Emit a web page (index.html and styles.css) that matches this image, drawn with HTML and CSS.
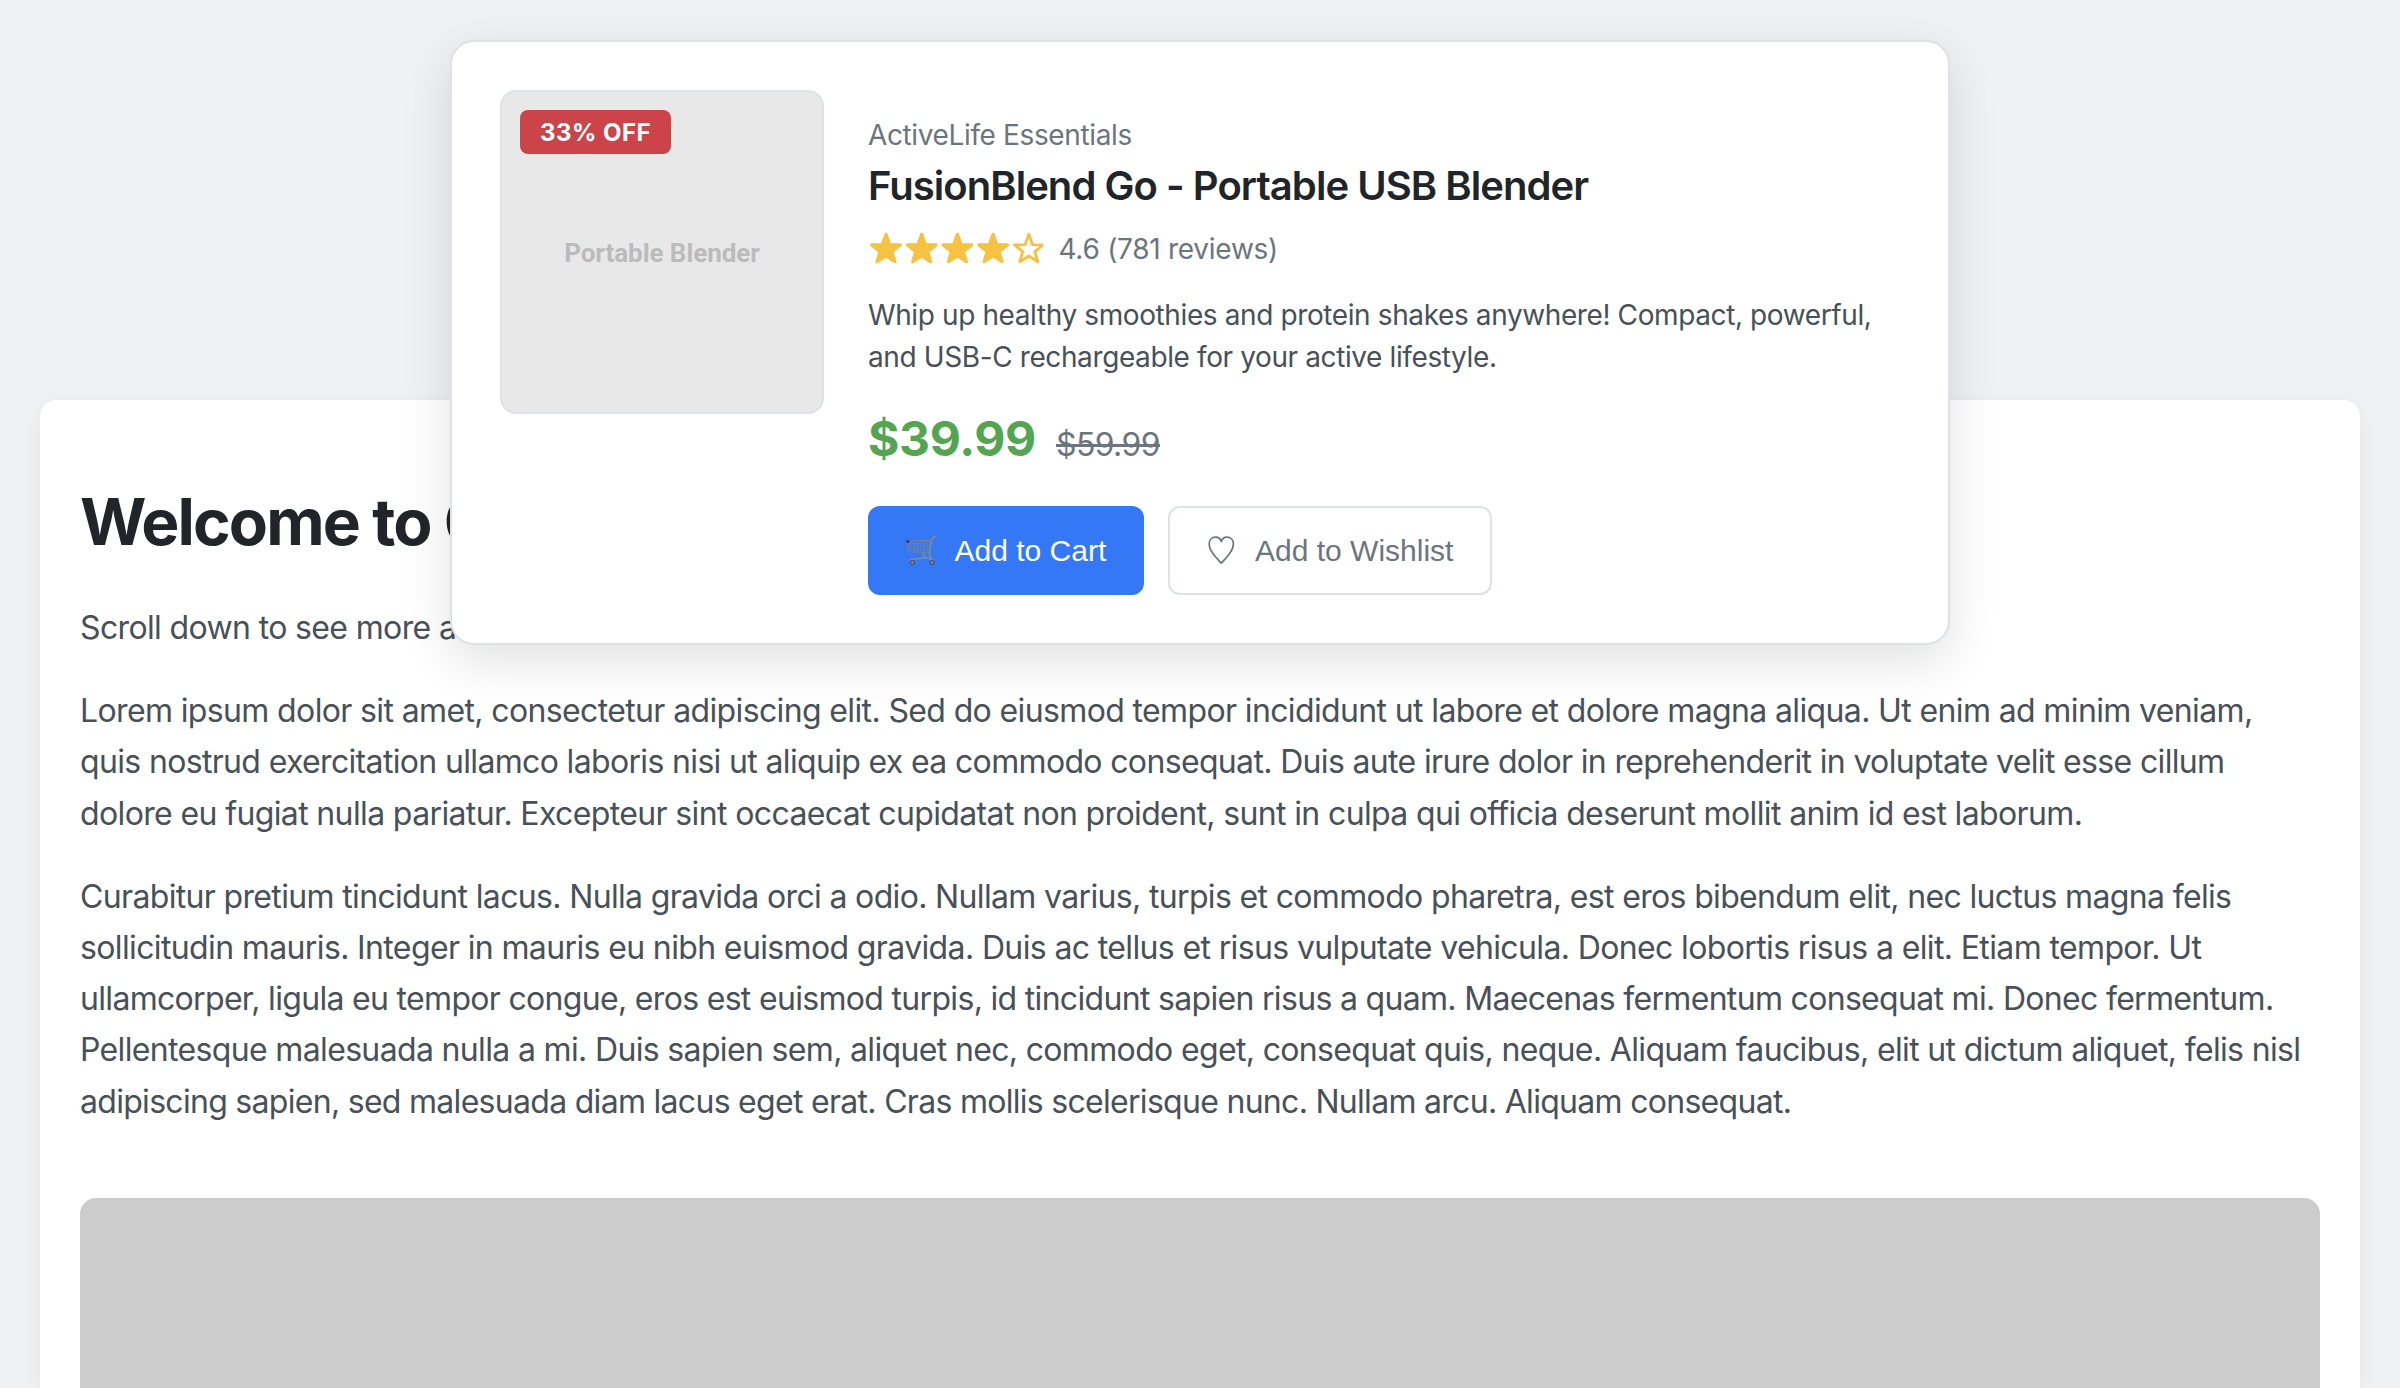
FILE: index.html
```html
<!DOCTYPE html>
<html lang="en">
<head>
<meta charset="utf-8">
<title>FusionBlend Go - Portable USB Blender</title>
<link rel="stylesheet" href="styles.css">
</head>
<body>
<main class="page">
  <h1 class="page-title">Welcome to Our</h1>
  <p class="intro">Scroll down to see more and</p>
  <p>
    <span class="line t1">Lorem ipsum dolor sit amet, consectetur adipiscing elit. Sed do eiusmod tempor incididunt ut labore et dolore magna aliqua. Ut enim ad minim veniam,</span>
    <span class="line t2">quis nostrud exercitation ullamco laboris nisi ut aliquip ex ea commodo consequat. Duis aute irure dolor in reprehenderit in voluptate velit esse cillum</span>
    <span class="line t1">dolore eu fugiat nulla pariatur. Excepteur sint occaecat cupidatat non proident, sunt in culpa qui officia deserunt mollit anim id est laborum.</span>
  </p>
  <p>
    <span class="line t2">Curabitur pretium tincidunt lacus. Nulla gravida orci a odio. Nullam varius, turpis et commodo pharetra, est eros bibendum elit, nec luctus magna felis</span>
    <span class="line t1">sollicitudin mauris. Integer in mauris eu nibh euismod gravida. Duis ac tellus et risus vulputate vehicula. Donec lobortis risus a elit. Etiam tempor. Ut</span>
    <span class="line t3">ullamcorper, ligula eu tempor congue, eros est euismod turpis, id tincidunt sapien risus a quam. Maecenas fermentum consequat mi. Donec fermentum.</span>
    <span class="line t2">Pellentesque malesuada nulla a mi. Duis sapien sem, aliquet nec, commodo eget, consequat quis, neque. Aliquam faucibus, elit ut dictum aliquet, felis nisl</span>
    <span class="line t4">adipiscing sapien, sed malesuada diam lacus eget erat. Cras mollis scelerisque nunc. Nullam arcu. Aliquam consequat.</span>
  </p>
  <div class="banner"></div>
</main>
<article class="card">
  <div class="photo"><span class="badge">33% OFF</span><span class="photo-label">Portable Blender</span></div>
  <div class="details">
    <div class="brand">ActiveLife Essentials</div>
    <h2 class="name">FusionBlend Go - Portable USB Blender</h2>
    <div class="rating">
      <svg class="stars" viewBox="0 0 175 33" width="175" height="33">
        <defs><path id="star" d="M18 2.3 L21.7 12.6 L32.3 12.9 L24 19.6 L27 29.7 L18 24 L9 29.7 L12 19.6 L3.7 12.9 L14.3 12.6 Z"/></defs>
        <g fill="#f5c242" stroke="#f5c242" stroke-width="3.2" stroke-linejoin="round">
          <use href="#star"/><use href="#star" x="35.7"/><use href="#star" x="71.4"/><use href="#star" x="107.1"/>
          <use href="#star" x="142.8" fill="#fff" stroke-width="2.9"/>
        </g>
      </svg>
      <span>4.6 (781 reviews)</span>
    </div>
    <div class="desc"><span class="line">Whip up healthy smoothies and protein shakes anywhere! Compact, powerful,</span><span class="line">and USB-C rechargeable for your active lifestyle.</span></div>
    <div class="prices"><span class="price">$39.99</span><s class="old">$59.99</s></div>
    <div class="actions">
      <button class="btn primary">
        <svg width="32.5" height="32" viewBox="0 0 32.5 32" fill="none" stroke="#78808f" stroke-width="1.1">
          <path d="M.8 6.3 25.6 5.2 23.4 18 1.9 16.5Z"/>
          <path stroke-width=".7" d="M1 8.7 25 8M1.3 11.2 24.5 11M1.6 13.8 24 14.5M4.5 6.2 5 16.5M8 6 8.3 16.8M11.5 5.8V17M15 5.6V17.2M18.6 5.5 18.2 17.5M22 5.4 21 17.8"/>
          <path stroke="#858b98" stroke-width="1.5" d="M29.8 1.2 27.3 2.6 25.6 5.2 23.3 18.2 25.8 25M16.7 17.8 19.8 22.8M3.6 25.2 8 24 22.5 22.5 26 26"/>
          <path stroke="none" fill="#273a62" d="M.2 5.3h3.1v2.5H.2z"/>
          <g fill="#a0a0a4" stroke="#4d5366" stroke-width="1.5"><circle cx="6.3" cy="27.6" r="1.9"/><circle cx="26.2" cy="27.6" r="1.9"/></g>
        </svg>
        <span>Add to Cart</span>
      </button>
      <button class="btn wish">
        <svg width="33" height="32" viewBox="0 0 33 32" fill="none" stroke="#6c757d" stroke-width="1.7" stroke-linejoin="round">
          <path d="M15.3 6.6C14.3 3.6 12.3 2.2 9.7 2.2 5.8 2.2 3.2 5 3.2 9 3.2 15.6 9.6 22 15.3 28.2 21 22 27.4 15.6 27.4 9 27.4 5 24.8 2.2 20.9 2.2 18.3 2.2 16.3 3.6 15.3 6.6Z"/>
        </svg>
        <span>Add to Wishlist</span>
      </button>
    </div>
  </div>
</article>
</body>
</html>
```
FILE: styles.css
```css
* { box-sizing: border-box; }
html, body { margin: 0; height: 1388px; overflow: hidden; }
body { padding: 400px 40px 0; background: #f0f1f5; font-family: Inter, sans-serif; color: #495057; }

.page { height: 988px; padding: 84.1px 40px 0; overflow: hidden; background: #fff; border-radius: 16px 16px 0 0; box-shadow: 0 4px 20px rgba(0,0,0,.05); }
.page-title { width: 420px; margin: 0 0 41.9px; font-size: 64px; line-height: 76px; color: #212529; letter-spacing: -1.88px; white-space: nowrap; }
.page p { margin: 0 0 32px; font-size: 32px; line-height: 51.2px; }
.page .intro { letter-spacing: -.64px; white-space: nowrap; }
.line { display: block; white-space: nowrap; }
.t1 { letter-spacing: -.63px; }
.t2 { letter-spacing: -.655px; }
.t3 { letter-spacing: -.682px; }
.t4 { letter-spacing: -.705px; }
.banner { height: 190px; margin-top: 71.6px; background: #ccc; border-radius: 16px 16px 0 0; }

/* product card floats over the page */
.card { position: absolute; left: 450px; top: 40px; width: 1500px; height: 605px; padding: 48px; display: flex; gap: 44px; background: #fff; border: 2px solid #dee2e6; border-radius: 24px; box-shadow: 0 16px 50px rgba(0,0,0,.12); }
.photo { width: 324px; height: 324px; display: flex; align-items: center; justify-content: center; position: relative; background: #e8e8e8; border: 2px solid #dee2e6; border-radius: 16px; }
.photo-label { padding-top: 2px; font: bold 26px Roboto, sans-serif; color: #bbb; letter-spacing: -.05px; }
.badge { position: absolute; left: 18px; top: 18px; width: 151px; padding: 1px 0 0 20px; height: 44px; line-height: 44px; border-radius: 8px; background: #cb444a; color: #fff; font-size: 24px; font-weight: 700; letter-spacing: .5px; }
.details { flex: 1; padding-top: 24px; font-size: 28px; line-height: 42px; letter-spacing: -.37px; }
.brand, .rating { color: #6c757d; }
.name { margin: 4px 0 16px; font-size: 40px; line-height: 52px; font-weight: 600; color: #212529; letter-spacing: -.95px; }
.rating { display: flex; gap: 15.5px; letter-spacing: -.27px; }
.stars { margin-top: 4px; }
.desc { margin-top: 24px; letter-spacing: -.39px; }
.prices { margin-top: 32px; line-height: 58px; display: flex; align-items: baseline; gap: 20px; }
.price { font-size: 48px; font-weight: 700; color: #54a552; letter-spacing: -.33px; }
.old { font-size: 32px; color: #6c757d; letter-spacing: -.62px; text-decoration-thickness: 3px; }
.actions { margin-top: 32px; display: flex; gap: 24px; }
.btn { display: flex; align-items: center; gap: 16px; width: 276px; height: 89px; padding: 0 36px; font: 30px "Liberation Sans", sans-serif; white-space: nowrap; border: 2px solid #dee2e6; border-radius: 12px; background: #fff; color: #6c757d; }
.btn svg { flex: none; }
.primary { background: #3478f6; border-color: #3478f6; color: #fff; }
.wish { width: 324px; }
```
